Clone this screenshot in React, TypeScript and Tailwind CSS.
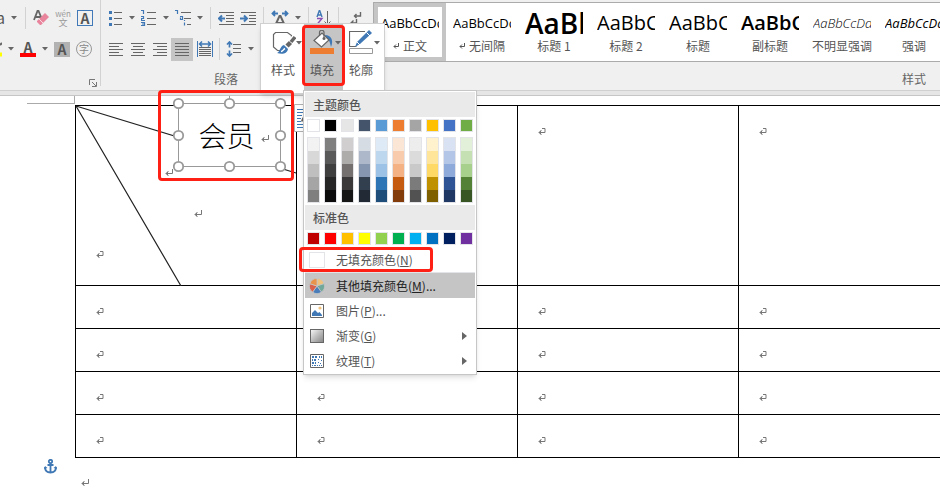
import type { ReactNode } from 'react';

const themeColors = [
  { base: '#ffffff', shades: ['#f2f2f2', '#d8d8d8', '#bfbfbf', '#a5a5a5', '#7f7f7f'] },
  { base: '#000000', shades: ['#7f7f7f', '#595959', '#3f3f3f', '#262626', '#0c0c0c'] },
  { base: '#e7e6e6', shades: ['#d0cece', '#aeabab', '#757070', '#3a3838', '#171616'] },
  { base: '#44546a', shades: ['#d6dce4', '#adb9ca', '#8496b0', '#323f4f', '#222a35'] },
  { base: '#5b9bd5', shades: ['#deebf6', '#bdd7ee', '#9cc3e5', '#2e75b5', '#1e4e79'] },
  { base: '#ed7d31', shades: ['#fbe5d5', '#f7cbac', '#f4b183', '#c55a11', '#833c0b'] },
  { base: '#a5a5a5', shades: ['#ededed', '#dbdbdb', '#c9c9c9', '#7b7b7b', '#525252'] },
  { base: '#ffc000', shades: ['#fff2cc', '#fee599', '#ffd965', '#bf9000', '#7f6000'] },
  { base: '#4472c4', shades: ['#d9e2f3', '#b4c6e7', '#8eaadb', '#2f5496', '#1f3864'] },
  { base: '#70ad47', shades: ['#e2efd9', '#c5e0b3', '#a8d08d', '#538135', '#375623'] },
];

const standardColors = [
  '#c00000', '#ff0000', '#ffc000', '#ffff00', '#92d050',
  '#00b050', '#00b0f0', '#0070c0', '#002060', '#7030a0',
];

const styleItems = [
  { label: '正文', sample: 'AaBbCcDd', mark: true, selected: true, preview: 'text-[13px]' },
  { label: '无间隔', sample: 'AaBbCcDd', mark: true, preview: 'text-[13px]' },
  { label: '标题 1', sample: 'AaBb', preview: 'text-[28px] font-semibold' },
  { label: '标题 2', sample: 'AaBbC', preview: 'text-[20px]' },
  { label: '标题', sample: 'AaBbC', preview: 'text-[20px]' },
  { label: '副标题', sample: 'AaBbC', preview: 'text-[20px] font-semibold' },
  { label: '不明显强调', sample: 'AaBbCcDd', preview: 'text-[13px] italic text-[#404040] font-light' },
  { label: '强调', sample: 'AaBbCcDd', preview: 'text-[13px] italic' },
];

function Caret() {
  return (
    <svg width="6" height="4" viewBox="0 0 6 4" className="shrink-0" aria-hidden="true">
      <path d="M0 0h6L3 3.400z" fill="#666" />
    </svg>
  );
}

function ReturnMark({ cell, className = '' }: { cell?: boolean; className?: string }) {
  return (
    <svg width="8" height="8" viewBox="0 0 8 8" className={className} fill="none" stroke="#777" aria-hidden="true">
      <path d={cell ? 'M4 .5h3v4H1' : 'M7.500 0v4.500H1'} />
      <path d="M3.500 2L1 4.500 3.500 7M2.500 3v3" />
    </svg>
  );
}

function Sep({ className = '' }: { className?: string }) {
  return <span className={`h-[22px] w-px shrink-0 bg-[#d2d2d2] ${className}`} />;
}

function Icon({ w = 16, label, children }: { w?: number; label: string; children: ReactNode }) {
  return (
    <button type="button" aria-label={label} className="shrink-0">
      <svg width={w} height="16" viewBox={`0 0 ${w} 16`} fill="none" stroke="#666" className="block">
        {children}
      </svg>
    </button>
  );
}

function FontGroup() {
  return (
    <div className="h-[86px] w-[101px] shrink-0 border-r border-[#d2d2d2] text-[#555]">
      <div className="flex h-9 items-center gap-1.5">
        <span className="w-[5px] text-right text-[15px] [direction:rtl]">a</span>
        <Caret />
        <span className="flex w-1 justify-center"><Sep /></span>
        <Icon label="清除格式">
          <path d="M1 10L4.500 1h1L8.500 8M2.500 7h5" strokeWidth="1.800" />
          <path d="M4 11l8-8 4 4-8 8H7l-3-3z" fill="#e8849b" stroke="none" />
          <path d="M6 9l4 4" stroke="#f6dbe1" />
        </Icon>
        <span className="flex w-4 flex-col items-center text-[#999]">
          <span className="text-[8px] leading-[8px]">wén</span>
          <span className="text-[9px] leading-[9px]">文</span>
        </span>
        <button type="button" className="size-4 border border-[#4078b8] text-[14px] leading-[14px] font-bold">A</button>
      </div>
      <div className="flex h-[26px] items-center gap-1.5">
        <Icon w={2} label="突出显示">
          <path d="M0 4l2-2" strokeWidth="2" />
          <path d="M0 13.500h2" stroke="#ffff00" strokeWidth="4" />
        </Icon>
        <Caret />
        <button type="button" className="h-4 w-4 border-b-4 border-[#ff0000] text-[14px] leading-[12px] font-bold">A</button>
        <Caret />
        <button type="button" className="h-[15px] w-4 bg-[#b2b2b2] text-[14px] leading-[15px] font-bold">A</button>
        <button type="button" className="size-4 rounded-full border border-[#999] text-[10px] leading-[14px] text-[#888]">字</button>
      </div>
    </div>
  );
}

function ParagraphGroup() {
  return (
    <div className="h-[90px] w-[272px] shrink-0 overflow-hidden pl-2">
      <div className="flex h-9 items-center gap-1.5">
        <Icon w={14} label="项目符号">
          <path d="M5 2.500h8M5 8.500h8M5 14.500h8" />
          <path d="M0 2.500h3M0 8.500h3M0 14.500h3" stroke="#3f78b4" strokeWidth="3" />
        </Icon>
        <Caret />
        <Icon label="编号">
          <path d="M6 2.500h9M6 8.500h9M6 14.500h9" />
          <path d="M0 .5h2.500V4M0 6.500h2.500v2H.5v2H4M0 12.500h3.500v3H0M1 14h2" stroke="#3f78b4" strokeWidth="1.200" />
        </Icon>
        <Caret />
        <Icon label="多级列表">
          <path d="M6 2.500h10M9 8.500h7M12 14.500h4" />
          <path d="M0 .5h2.500V4M5 6.500h2.500v3h-2v-2M9.500 12.500v3M9.500 10v1" stroke="#3f78b4" strokeWidth="1.200" />
        </Icon>
        <Caret />
        <Sep className="mx-px" />
        <Icon label="减少缩进">
          <path d="M1 2.500h15M8 5.500h8M8 8.500h8M8 11.500h8M1 14.500h15" />
          <path d="M1 8.500h6M4 5.500l-3 3 3 3" stroke="#3f78b4" strokeWidth="2" />
        </Icon>
        <Icon label="增加缩进">
          <path d="M1 2.500h15M9 5.500h7M9 8.500h7M9 11.500h7M1 14.500h15" />
          <path d="M0 8.500h7M4 5.500l3 3-3 3" stroke="#3f78b4" strokeWidth="2" />
        </Icon>
        <Sep className="mx-px" />
        <Icon w={18} label="中文版式">
          <path d="M4 16L8.500 6h1L14 16M6 13h6" strokeWidth="2" />
          <path d="M2 3.500h5M11 3.500h5M4 1L1.500 3.500 4 6M14 1l2.500 2.500L14 6" stroke="#3f78b4" strokeWidth="1.800" />
        </Icon>
        <Caret />
        <Sep className="mx-px" />
        <Icon label="排序">
          <path d="M1 7L3.500 0 6 7M2 5h3" stroke="#3f78b4" strokeWidth="1.400" />
          <path d="M1 8.500h5l-5 6h5" stroke="#8a4fb5" strokeWidth="1.400" />
          <path d="M11.500 1v13M8.500 11.500l3 3 3-3" />
        </Icon>
        <Sep />
        <Icon w={24} label="显示编辑标记">
          <path d="M15.500 2v4h-6M11.500 4l-2 2 2 2M11.500 9v4h-5M8.500 10.500L6 13l2.500 2.500" strokeWidth="1.400" />
        </Icon>
      </div>
      <div className="flex h-[26px] items-center gap-1">
        <div className="flex gap-2">
          <Icon w={14} label="左对齐">
            <path d="M0 2.500h14M0 5.500h10M0 8.500h14M0 11.500h10M0 14.500h14" />
          </Icon>
          <Icon w={14} label="居中">
            <path d="M0 2.500h14M2 5.500h10M0 8.500h14M2 11.500h10M0 14.500h14" />
          </Icon>
          <Icon w={14} label="右对齐">
            <path d="M0 2.500h14M4 5.500h10M0 8.500h14M4 11.500h10M0 14.500h14" />
          </Icon>
        </div>
        <span className="flex h-[23px] w-[22px] items-center justify-center bg-[#c5c5c5]">
          <Icon w={14} label="两端对齐">
            <path d="M0 2.500h14M0 5.500h14M0 8.500h14M0 11.500h14M0 14.500h14" />
          </Icon>
        </span>
        <Icon label="分散对齐">
          <path d="M2 6.500h12M2 8.500h12M2 10.500h12M2 12.500h12M2 14.500h12" />
          <path d="M.5 0v16M15.500 0v16" stroke="#3f78b4" />
          <path d="M3 3h10M5 .5L2.500 3 5 5.500M11 .5L13.500 3 11 5.500" stroke="#3f78b4" strokeWidth="1.500" />
        </Icon>
        <span className="flex items-center gap-1.5 pl-0.5">
          <Sep />
          <Icon label="行距">
            <path d="M7 3.500h8M7 7.500h8M7 11.500h8" />
            <path d="M3.500 1v5.500M3.500 9.500V15M1 3.500L3.500 1 6 3.500M1 12.500L3.500 15 6 12.500" stroke="#3f78b4" strokeWidth="1.700" />
          </Icon>
          <Caret />
        </span>
      </div>
      <div className="mt-2 w-[234px] text-center text-xs leading-[18px] text-[#666]">段落</div>
    </div>
  );
}

function StyleGallery() {
  return (
    <div className="min-w-0 flex-1 pt-0.5">
      <div className="flex h-[60px] overflow-hidden border-y border-l border-[#ababab] bg-white">
        {styleItems.map((item) => (
          <button
            key={item.label}
            type="button"
            className={`flex w-[72px] shrink-0 flex-col items-center ${item.selected ? 'outline-4 -outline-offset-4 outline-[#c5c5c5]' : ''}`}
          >
            <span className={`h-[34px] w-[58px] overflow-hidden pt-0.5 text-left font-['Open_Sans'] leading-9 whitespace-nowrap text-black ${item.preview}`}>
              {item.sample}
            </span>
            <span className="flex items-center gap-1 text-xs leading-[18px] whitespace-nowrap text-[#555]">
              {item.mark && (
                <svg width="6" height="6" viewBox="0 0 6 6" fill="none" stroke="#555" aria-hidden="true">
                  <path d="M5.500 0v3.500H1M3 1.500l-2 2 2 2" />
                </svg>
              )}
              {item.label}
            </span>
          </button>
        ))}
      </div>
      <div className="mt-2 pr-3.5 text-right text-xs leading-[18px] text-[#666]">样式</div>
    </div>
  );
}

function ToolButton({ label, active, children }: { label: string; active?: boolean; children: ReactNode }) {
  return (
    <button
      type="button"
      className={`flex h-[67px] w-[39px] flex-col items-start pt-1.5 pl-1.5 text-[#555] ${active ? 'bg-[#c5c5c5]' : ''}`}
    >
      <span className="flex items-center">
        <svg width="25" height="25" viewBox="0 0 25 25" fill="none" stroke="#666" aria-hidden="true">
          {children}
        </svg>
        <Caret />
      </span>
      <span className="mt-1 text-xs leading-[22px]">{label}</span>
    </button>
  );
}

function MiniToolbar() {
  return (
    <div className="absolute top-[23px] left-[260px] flex border border-[#d0d0d0] bg-white pr-0.5 pb-0.5 pl-1 shadow-md">
      <ToolButton label="样式">
        <path d="M9 20.500H6.500L2.500 17V4.500l2-2h12l4 3V9" strokeWidth="1.200" />
        <path d="M24 7L15.500 16" stroke="#fff" strokeWidth="6" />
        <path d="M24 7l-4 5" strokeWidth="3.500" />
        <path d="M19.500 12.500L16 16" strokeWidth="4.500" />
        <path d="M13 15l4 4c-1 5-6 5.500-11 4 3-1 3-7 7-8z" fill="#3f78b4" stroke="none" />
        <path d="M10 21.500c2 0 2-2 4-3" stroke="#fff" strokeWidth="1.500" />
      </ToolButton>
      <ToolButton label="填充" active>
        <path d="M15 5c6 0 9 5 6 12-1-5-2-8-5-9z" fill="#3f78b4" stroke="none" />
        <path d="M4 10.500L12 3l7 7-7.500 7z" fill="#fff" strokeWidth="1.200" />
        <path d="M9.500 6V2.500c0-3 4.500-3 4.500 0V8" strokeWidth="1.200" />
        <circle cx="14" cy="8.500" r="1.500" fill="#666" stroke="none" />
        <path d="M0 18h24v6H0z" fill="#ed7d31" stroke="none" />
      </ToolButton>
      <ToolButton label="轮廓">
        <path d="M16 1.500H.5v15h7" strokeWidth="1.200" />
        <path d="M8 12L20 0l3 3-12 11-5 3z" fill="#3f78b4" stroke="none" />
        <path d="M17.500 2.500l3.500 3.500M8 12l3 3" stroke="#fff" />
        <path d="M.5 18.500h23v5H.5z" fill="#fff" stroke="#999" />
      </ToolButton>
    </div>
  );
}

function MenuHeading({ children }: { children: ReactNode }) {
  return <h3 className="h-[25px] bg-[#eaeaea] pl-2 text-xs leading-[25px] font-medium text-[#555]">{children}</h3>;
}

function MenuItem({ icon, hotkey, more, sub, active, children }: {
  icon: ReactNode;
  hotkey: string;
  more?: boolean;
  sub?: boolean;
  active?: boolean;
  children: ReactNode;
}) {
  return (
    <button
      type="button"
      className={`flex h-[25px] w-full items-center gap-[11px] pr-2 pl-1 text-xs ${active ? 'bg-[#c5c5c5] text-[#222]' : 'text-[#555]'}`}
    >
      {icon}
      <span className="flex-1 text-left">
        {children}(<u>{hotkey}</u>){more && '...'}
      </span>
      {sub && (
        <svg width="5" height="8" viewBox="0 0 5 8" aria-hidden="true">
          <path d="M0 0v8l5-4z" fill="#666" />
        </svg>
      )}
    </button>
  );
}

function FillMenu() {
  return (
    <div className="absolute top-[90px] left-[303px] w-[174px] border border-[#c6c6c6] bg-white p-px shadow-md">
      <MenuHeading>主题颜色</MenuHeading>
      <div className="flex gap-1 px-0.5 pt-0.5 pb-px">
        {themeColors.map((color) => (
          <div key={color.base} className="flex w-[13px] flex-col gap-[5px]">
            <button
              type="button"
              aria-label={color.base}
              className="size-[13px] border border-[#e2e4e7]"
              style={{ backgroundColor: color.base }}
            />
            <div className="border border-[#e2e4e7]">
              {color.shades.map((shade) => (
                <button
                  key={shade}
                  type="button"
                  aria-label={shade}
                  className="block h-[13px] w-full last:h-3"
                  style={{ backgroundColor: shade }}
                />
              ))}
            </div>
          </div>
        ))}
      </div>
      <div className="pt-px">
        <MenuHeading>标准色</MenuHeading>
      </div>
      <div className="flex gap-1 px-0.5 py-0.5">
        {standardColors.map((color) => (
          <button
            key={color}
            type="button"
            aria-label={color}
            className="size-[13px] border border-[#e2e4e7]"
            style={{ backgroundColor: color }}
          />
        ))}
      </div>
      <MenuItem hotkey="N" icon={<span className="size-4 border border-[#e2e4e7]" />}>无填充颜色</MenuItem>
      <hr className="border-[#e2e4e7]" />
      <MenuItem
        hotkey="M"
        more
        active
        icon={
          <svg width="16" height="16" viewBox="0 0 16 16" aria-hidden="true" stroke="#c5c5c5" strokeWidth=".8">
            <path d="M8 8V.5A7.500 7.500 0 0 1 15.100 5.700z" fill="#f0c27c" />
            <path d="M8 8l7.100-2.300A7.500 7.500 0 0 1 12.400 14.100z" fill="#71a899" />
            <path d="M8 8l4.400 6.100A7.500 7.500 0 0 1 3.600 14.100z" fill="#4a7ebb" />
            <path d="M8 8l-4.400 6.100A7.500 7.500 0 0 1 .9 5.700z" fill="#d9604a" />
            <path d="M8 8L.9 5.700A7.500 7.500 0 0 1 8 .5z" fill="#e8924a" />
          </svg>
        }
      >
        其他填充颜色
      </MenuItem>
      <MenuItem
        hotkey="P"
        more
        icon={
          <svg width="16" height="16" viewBox="0 0 16 16" fill="#fff" aria-hidden="true">
            <path d="M1.500 1.500h13v13h-13z" stroke="#666" />
            <path d="M3 13V10l3-3 3 3 1.500-1L13 12v1z" fill="#3f78b4" />
            <circle cx="11" cy="5" r="1.600" fill="#f0c27c" />
          </svg>
        }
      >
        图片
      </MenuItem>
      <MenuItem
        hotkey="G"
        sub
        icon={
          <span className="flex size-4 p-px">
            <span className="flex-1 border border-[#666] bg-linear-to-br from-[#f4f4f4] to-[#888]" />
          </span>
        }
      >
        渐变
      </MenuItem>
      <MenuItem
        hotkey="T"
        sub
        icon={
          <svg width="16" height="16" viewBox="0 0 16 16" fill="none" stroke="#3f78b4" aria-hidden="true">
            <path d="M1.500 1.500h13v13h-13z" fill="#fff" stroke="#666" />
            <path d="M3 4h2M6 4h2M10 4h1M12 4h1M3 7h1M5 7h2M3 10h2M6 10h1" strokeWidth="2" />
            <path d="M9 6.500h1M12 7.500h1M9 9.500h1M11 10.500h1M3 12.500h1M5 12.500h2M8 12.500h1M10 12.500h1M12 12.500h1" />
          </svg>
        }
      >
        纹理
      </MenuItem>
    </div>
  );
}

function TextBox() {
  const handles = [
    [5, 7], [56, 7], [107, 7],
    [5, 39], [107, 39],
    [5, 70], [56, 70], [107, 70],
  ];
  return (
    <div className="absolute top-[96px] left-[173px] flex h-[77px] w-[113px] items-center justify-center">
      <svg width="113" height="77" viewBox="0 0 113 77" className="absolute inset-0" aria-hidden="true">
        <path d="M5.500 7.500h102v63H5.500z" fill="#fff" stroke="#999" />
        <path d="M56.500 0v7" stroke="#999" />
        {handles.map(([x, y]) => (
          <circle key={`${x}-${y}`} cx={x + 0.5} cy={y + 0.5} r="4.700" fill="#fff" stroke="#999" strokeWidth="1.800" />
        ))}
      </svg>
      <div className="relative flex items-center gap-1.5 pl-2">
        <span className="text-[28px] leading-8 font-light text-black">会员</span>
        <ReturnMark className="mt-2" />
      </div>
    </div>
  );
}

function HighlightBox({ className }: { className: string }) {
  return <div className={`pointer-events-none absolute rounded-sm border-[3px] border-[#ff2015] ${className}`} />;
}

export default function App() {
  return (
    <div className="relative min-h-screen overflow-hidden bg-white font-['Noto_Sans_CJK_SC',sans-serif]">
      {/* Ribbon */}
      <header className="relative flex h-[91px] border-b border-[#d0d0d0] bg-[#f0f0f0]">
        <FontGroup />
        <ParagraphGroup />
        <StyleGallery />
        <svg width="8" height="8" viewBox="0 0 8 8" fill="none" stroke="#777" className="absolute top-[79px] left-[89px]" aria-hidden="true">
          <path d="M.5 6V.5H6M3 3l4 4M7.500 3v4.500H3" />
        </svg>
      </header>
      <div className="h-[5px] border-b border-[#c6c6c6] bg-[#e6e6e6]" />

      {/* Document */}
      <main>
        <div className="ml-[27px] h-2 w-12 border-r border-b border-[#aaa]" />
        <div className="relative mt-px ml-[75px]">
          <table className="w-[885px] table-fixed border-collapse">
            <tbody>
              {[0, 1, 2, 3, 4].map((row) => (
                <tr key={row} className={row === 0 ? 'h-[180px]' : 'h-[43px]'}>
                  {[0, 1, 2, 3].map((col) => (
                    <td key={col} className="border border-black pt-[22px] pl-5 align-top">
                      {(row > 0 || col > 0) && <ReturnMark cell />}
                    </td>
                  ))}
                </tr>
              ))}
            </tbody>
          </table>
          {/* Diagonal header lines of the first cell */}
          <svg width="222" height="181" viewBox="0 0 222 181" stroke="#222" className="absolute top-0 left-0" aria-hidden="true">
            <path d="M1 1l105 180M1 1l220 67" strokeWidth="1.200" />
          </svg>
          <ReturnMark cell className="absolute top-[146px] left-[21px]" />
          <ReturnMark className="absolute top-[105px] left-[119px]" />
          <ReturnMark className="absolute top-[64px] left-[90px]" />
        </div>
        <div className="flex items-start gap-6 pl-11">
          <svg width="13" height="15" viewBox="0 0 13 15" fill="none" stroke="#3f78b4" strokeWidth="1.800" className="mt-px" aria-hidden="true">
            <circle cx="6.500" cy="2.500" r="1.700" />
            <path d="M6.500 4v9.500M3.500 6h6M1 8c0 4 2 5.500 5.500 5.500S12 12 12 8" />
            <path d="M0 10l1-3 2.500 2zM13 10l-1-3-2.500 2z" fill="#3f78b4" stroke="none" />
          </svg>
          <ReturnMark className="mt-[21px]" />
        </div>
      </main>

      {/* Layout options */}
      <svg width="16" height="28" viewBox="0 0 16 28" fill="none" className="absolute top-[104px] left-[294px]" aria-hidden="true">
        <path d="M.5.5h16v27H.5z" fill="#fff" stroke="#b0b0b0" />
        <path d="M3 5.500h12M3 8.500h6M3 11.500h5M3 14.500h4M3 17.500h4M3 20.500h12M3 23.500h12" stroke="#3f78b4" />
        <path d="M7 17.500c1-5 4-7 9-7v7z" fill="#666" />
      </svg>

      <TextBox />
      <MiniToolbar />
      <FillMenu />

      <HighlightBox className="top-[25px] left-[302px] h-[61px] w-[43px]" />
      <HighlightBox className="top-[90px] left-[158px] h-[91px] w-[136px]" />
      <HighlightBox className="top-[247px] left-[299px] h-[25px] w-[134px]" />
    </div>
  );
}
